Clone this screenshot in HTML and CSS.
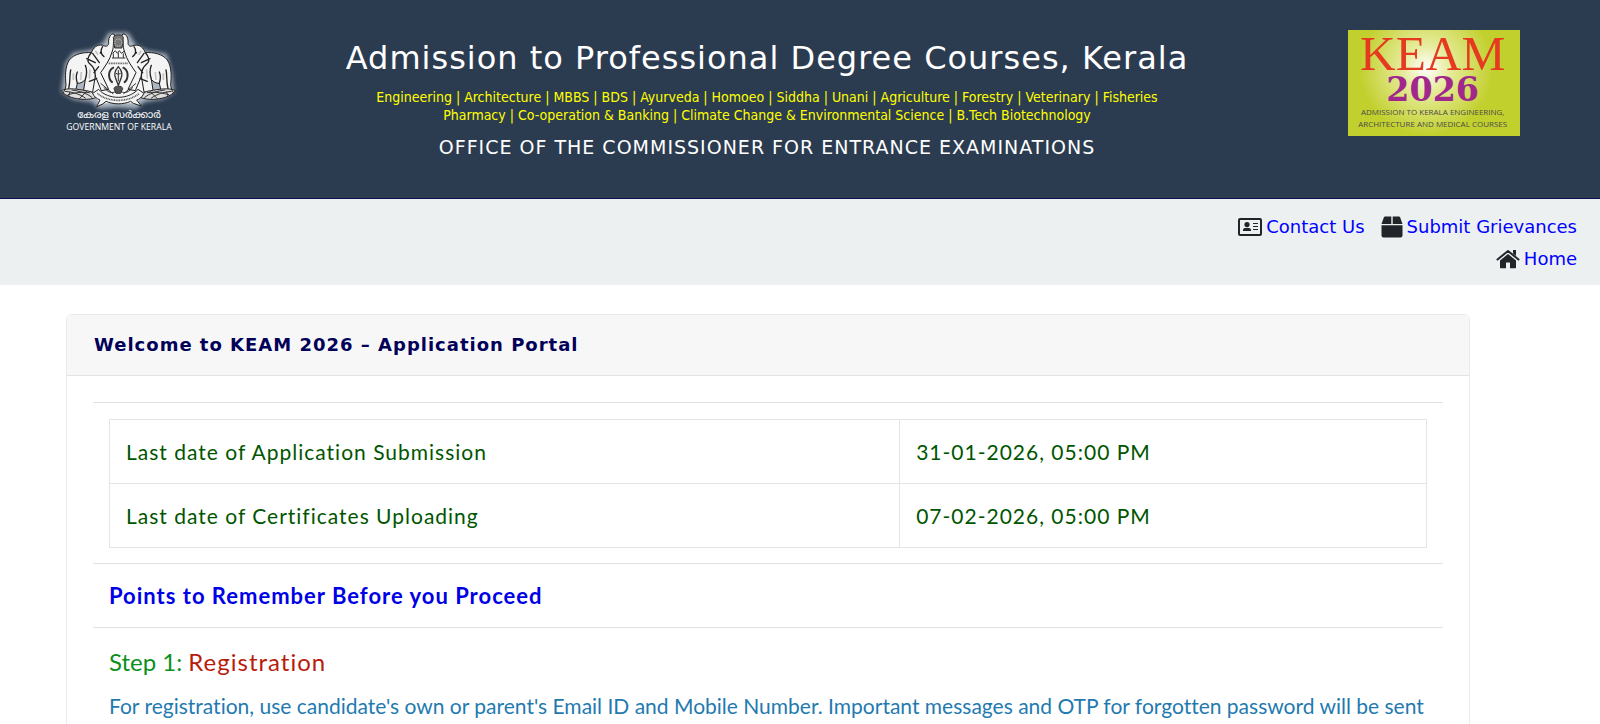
FILE: index.html
```html
<!DOCTYPE html>
<html lang="en">
<head>
<meta charset="utf-8">
<title>KEAM 2026 - Application Portal</title>
<link rel="stylesheet" href="styles.css">
</head>
<body>
<header class="masthead">
  <svg class="emblem" viewBox="0 0 540 390" role="img" aria-label="Government of Kerala">
    <defs>
      <filter id="glow" x="-20%" y="-20%" width="140%" height="140%"><feGaussianBlur stdDeviation="6"/></filter>
      <g id="elephant">
        <path fill="#f4f4f4" stroke="#1c1c1c" stroke-width="3" stroke-linejoin="round" d="M252 42C240 40 234 58 236 70C234 80 228 80 218 76C200 72 190 84 184 98C160 96 132 102 118 120C104 142 106 170 108 196L104 214L136 216L142 190C152 190 160 186 166 178L160 216L188 216L196 168L214 212L236 208L212 158C224 140 240 120 246 96C254 78 246 60 256 52Z"/>
        <path fill="none" stroke="#222" stroke-width="4" stroke-linecap="round" d="M184 98C172 110 170 124 180 132M188 100L208 128M218 80C210 90 212 104 222 110M180 132C190 140 196 152 196 168M122 150C118 166 122 180 116 206M142 190C138 178 138 166 142 156M166 178C172 160 170 146 166 136M170 116L196 128M206 140L192 158M178 184L200 176"/>
        <path fill="none" stroke="#c4c4c4" stroke-width="5" d="M154 156L152 180M130 160L130 180M196 92L204 104M180 148L178 176"/>
        <circle cx="212" cy="98" r="3" fill="#111"/>
        <path fill="#ddd" stroke="#222" stroke-width="3" stroke-linejoin="round" d="M94 212C112 202 146 208 168 212C186 214 194 222 200 232C176 242 142 238 124 232C112 228 100 222 94 212Z"/>
        <path fill="none" stroke="#333" stroke-width="3" stroke-linecap="round" d="M106 214C128 216 150 222 166 234M126 210C146 212 172 220 186 232M114 224C130 220 150 214 178 218M148 236L170 214M104 210L98 222M120 216L116 228"/>
      </g>
    </defs>
    <path fill="#d9e1ea" opacity=".75" filter="url(#glow)" d="M236 38H294L318 76L350 92L410 102L426 160L432 216L400 236L342 246L320 266L264 262L208 266L186 246L130 238L94 216L106 130L130 98L184 90L220 68Z"/>
    <path fill="#f6f6f6" d="M240 48L290 48L292 84L340 150L352 212L318 250L212 250L178 212L190 150L238 88Z"/>
    <use href="#elephant"/>
    <use href="#elephant" transform="translate(530 0) scale(-1 1)"/>
    <g fill="none" stroke="#333" stroke-width="3">
      <path fill="#777" d="M250 52C254 42 276 42 280 52L276 84H254Z"/>
      <circle cx="265" cy="68" r="11" stroke="#ddd" stroke-dasharray="3 3"/>
      <path d="M248 100L256 92L262 100L268 92L274 100L282 94M250 100V114M280 100V114M265 98V114M246 114H286"/>
      <path stroke="#777" stroke-width="5" stroke-dasharray="5 2" d="M236 130H294"/>
      <path stroke-width="6" d="M252 142C232 150 234 178 248 188M278 142C298 150 296 178 282 188"/>
      <path fill="#eee" stroke-width="4" d="M265 140C254 152 252 166 258 178L265 196L272 178C278 166 276 152 265 140Z"/>
      <path stroke-width="3" d="M265 150V184M258 160Q265 166 272 160"/>
      <path fill="#555" d="M252 206C252 196 278 196 278 206L272 220H258Z"/>
      <path d="M222 202C232 216 246 222 258 214M308 202C298 216 284 222 272 214M212 190L250 222M318 190L280 222"/>
    </g>
    <path fill="#f4f4f4" stroke="#222" stroke-width="3" stroke-linejoin="round" d="M188 220L206 208C234 240 296 240 324 208L342 220C336 232 328 238 320 240L334 258L310 250L302 244C280 254 250 254 228 244L218 252L200 260L210 240C200 236 192 230 188 220Z"/>
    <path fill="none" stroke="#555" stroke-width="5" stroke-dasharray="3 2" d="M202 220C234 248 296 248 328 220"/>
    <text class="emblem-ml" x="267" y="294" text-anchor="middle">കേരള സർക്കാർ</text>
    <text class="emblem-en" x="267" y="330" text-anchor="middle">GOVERNMENT OF KERALA</text>
  </svg>

  <div class="heading">
    <h1 class="title">Admission to Professional Degree Courses, Kerala</h1>
    <p class="courses">Engineering | Architecture | MBBS | BDS | Ayurveda | Homoeo | Siddha | Unani | Agriculture | Forestry | Veterinary | Fisheries<br>Pharmacy | Co-operation &amp; Banking | Climate Change &amp; Environmental Science | B.Tech Biotechnology</p>
    <p class="office">OFFICE OF THE COMMISSIONER FOR ENTRANCE EXAMINATIONS</p>
  </div>

  <svg class="badge" viewBox="0 0 516 318" role="img" aria-label="KEAM 2026">
    <defs>
      <radialGradient id="shine" gradientUnits="userSpaceOnUse" cx="235" cy="115" r="200">
        <stop offset="0" stop-color="#fff"/><stop offset=".35" stop-color="#e6ec9c"/><stop offset="1" stop-color="#c2d02e"/>
      </radialGradient>
    </defs>
    <rect width="516" height="318" fill="url(#shine)"/>
    <text class="badge-name" x="254" y="119" text-anchor="middle">KEAM</text>
    <text class="badge-year" x="254" y="213" text-anchor="middle">2026</text>
    <text class="badge-note" x="254" y="254" text-anchor="middle">ADMISSION TO KERALA ENGINEERING,</text>
    <text class="badge-note" x="254" y="290" text-anchor="middle">ARCHITECTURE AND MEDICAL COURSES</text>
  </svg>
</header>

<nav class="toolbar">
  <div class="links">
    <a class="link" href="#contact"><svg class="icon" viewBox="0 0 24 20"><rect x="1" y="2" width="22" height="16" rx="1" fill="none" stroke="#212529" stroke-width="2"/><circle cx="9" cy="7.500" r="2.600" fill="#212529"/><path fill="#212529" d="M5 14V13C5 11.500 6.500 10.800 9 10.800S13 11.500 13 13V14ZM15 6H20V7H15ZM15 9H20V10H15ZM15 12H20V13H15Z"/></svg>Contact Us</a>
    <a class="link" href="#grievances"><svg class="icon icon-box" viewBox="0 0 22 22"><path fill="#212529" d="M3 1Q3.300 .5 4 .5H10.300V8H.5ZM11.700 .5H18Q18.700 .5 19 1L21.500 8H11.700ZM.5 9.300H21.500V19.500Q21.500 21.500 19.500 21.500H2.500Q.5 21.500 .5 19.500Z"/></svg>Submit Grievances</a>
    <a class="link" href="#home"><svg class="icon" viewBox="0 0 24 20"><path fill="none" stroke="#212529" stroke-width="2" stroke-linecap="round" stroke-linejoin="round" d="M1.500 10.500L12 2L22.500 10.500"/><path fill="#212529" d="M17 1H20V7L17 4.500ZM12 5L20 11.500V18.500Q20 19.300 19.200 19.300H14V13.500H10V19.300H4.800Q4 19.300 4 18.500V11.500Z"/></svg>Home</a>
  </div>
</nav>

<main class="card">
  <h2 class="card-header">Welcome to KEAM 2026 – Application Portal</h2>
  <div class="card-body">
    <section class="block">
      <table class="dates">
        <tbody>
          <tr><td class="what">Last date of Application Submission</td><td>31-01-2026, 05:00 PM</td></tr>
          <tr><td class="what">Last date of Certificates Uploading</td><td>07-02-2026, 05:00 PM</td></tr>
        </tbody>
      </table>
    </section>
    <section class="block"><h3 class="points">Points to Remember Before you Proceed</h3></section>
    <section class="block">
      <h4 class="step">Step 1: <span class="step-name">Registration</span></h4>
      <p class="details">For registration, use candidate's own or parent's Email ID and Mobile Number. Important messages and OTP for forgotten password will be sent</p>
    </section>
  </div>
</main>
</body>
</html>
```
FILE: styles.css
```css
* { box-sizing: border-box; }
body {
  margin: 0;
  min-height: 100vh;
  display: flex;
  flex-direction: column;
  background: #fff;
  font-family: Lato, sans-serif;
  font-variant-ligatures: none;
}
h1, h2, h3, h4, p { margin: 0; font-weight: 400; }

.masthead {
  display: flex;
  align-items: flex-start;
  padding: 20px 80px 38px 30px;
  background: #2c3c50;
  border-bottom: 1px solid #0a0f50;
}
.emblem { width: 180px; height: 130px; flex: none; }
.emblem-ml { font: 31px "Noto Sans Malayalam", "Noto Sans", sans-serif; fill: #fff; }
.emblem-en { font: 26px "Open Sans", sans-serif; fill: #fff; }
.heading {
  flex: 1;
  padding: 16px 24px 0 0;
  text-align: center;
  font-family: "DejaVu Sans", sans-serif;
  color: #fff;
}
.title { font-size: 32px; line-height: 44px; letter-spacing: 1px; }
.courses {
  margin-top: 8px;
  font-family: "DejaVu Sans Condensed", "DejaVu Sans", sans-serif;
  font-size: 14px;
  line-height: 18px;
  color: #ff0;
}
.office { margin-top: 10px; font-size: 19px; line-height: 26px; letter-spacing: 1px; }
.badge { width: 172px; height: 106px; flex: none; margin-top: 10px; }
.badge-name { font: 148px "Liberation Serif", serif; fill: #e53a20; }
.badge-year { font: bold 100px "DejaVu Serif", serif; fill: #a0288c; }
.badge-note { font: 24px "Open Sans", sans-serif; fill: #4a4a48; }

.toolbar {
  display: flex;
  justify-content: flex-end;
  padding: 12px 23px 10px;
  background: #ecf0f1;
}
.links {
  display: flex;
  flex-wrap: wrap;
  justify-content: flex-end;
  column-gap: 16px;
  width: 360px;
}
.link {
  display: flex;
  align-items: center;
  gap: 4px;
  font: 18px/32px "DejaVu Sans", sans-serif;
  color: #00f;
  text-decoration: none;
}
.icon { height: 20px; flex: none; }
.icon-box { height: 22px; }

.card {
  flex: 1;
  margin: 29px 130px 0 66px;
  border: 1px solid #e9eaeb;
  border-bottom: 0;
  border-radius: 6px 6px 0 0;
}
.card-header {
  padding: 16px 27px;
  background: #f7f7f7;
  border-bottom: 1px solid #e2e3e4;
  font: bold 18px/28px "DejaVu Sans", sans-serif;
  letter-spacing: 1px;
  color: #000058;
}
.card-body { padding: 26px 26px 0; }
.block { padding: 16px 16px 15px; border-top: 1px solid #dfe2e4; }
.dates {
  width: 100%;
  border-collapse: collapse;
  font-size: 21px;
  line-height: 31px;
  letter-spacing: 1px;
  color: #005500;
}
.dates td { padding: 16px; border: 1px solid #e2e6e8; }
.dates .what { width: 60%; }
.points { font-size: 22px; line-height: 32px; font-weight: 700; letter-spacing: 1px; color: #0000e6; }
.step { padding-top: 4px; font-size: 24px; line-height: 28px; color: #0a9020; }
.step-name { color: #b81c0c; letter-spacing: 1px; }
.details { margin-top: 14px; font-size: 21px; line-height: 32px; color: #1f7ab0; }
```
